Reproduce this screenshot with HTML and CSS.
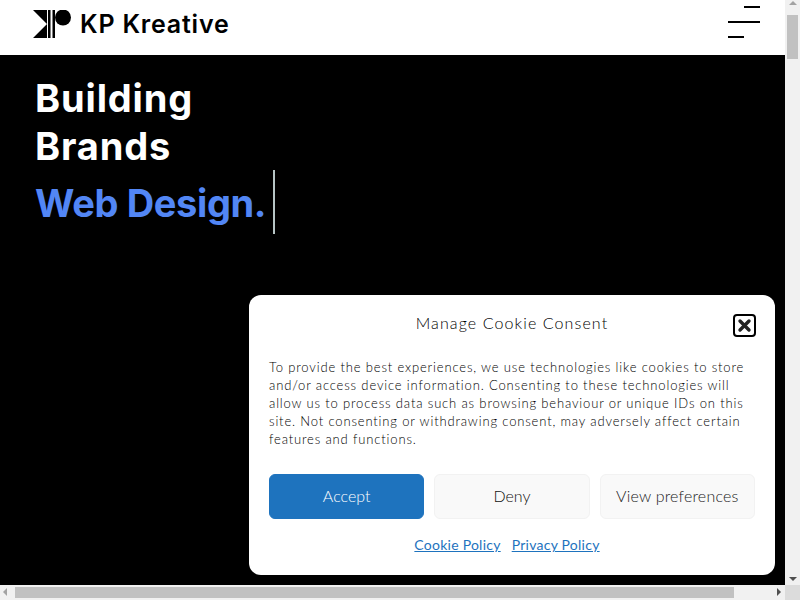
FILE: index.html
```html
<!DOCTYPE html>
<html lang="en">
<head>
    <meta charset="UTF-8">
    <meta name="viewport" content="width=device-width, initial-scale=1.0">
    <title>KP Kreative</title>
    <link rel="stylesheet" href="styles.css">
</head>
<body>

<div class="window">
    <div class="page">
        <header class="site-header">
            <a class="logo" href="#">
                <svg class="logo-mark" width="38" height="28" viewBox="0 0 38 28">
                    <path d="M0 0H14V14L0 0ZM0 28H14V14L0 28Z" fill="#000"/>
                    <rect x="15" y="0" width="2.5" height="28" fill="#000"/>
                    <rect x="19.5" y="0" width="2.5" height="28" fill="#000"/>
                    <circle cx="30" cy="7.5" r="8" fill="#000"/>
                </svg>
                <span class="logo-text">KP Kreative</span>
            </a>
            <button class="menu-toggle" aria-label="Menu">
                <span class="menu-line menu-line-short menu-line-right"></span>
                <span class="menu-line"></span>
                <span class="menu-line menu-line-short"></span>
            </button>
        </header>

        <section class="hero">
            <h1 class="hero-title">Building<br>Brands</h1>
            <div class="hero-typed">
                <span class="typed-text">Web Design.</span>
                <span class="typed-cursor"></span>
            </div>
        </section>
    </div>

    <div class="scrollbar-v">
        <span class="arrow arrow-up"></span>
        <span class="thumb-v"></span>
        <span class="arrow arrow-down"></span>
    </div>
    <div class="scrollbar-h">
        <span class="arrow arrow-left"></span>
        <span class="thumb-h"></span>
        <span class="arrow arrow-right"></span>
    </div>
    <div class="scrollbar-corner"></div>
</div>

<!-- Cookie banner ligt boven de pagina -->
<div class="cookie-banner">
    <div class="cookie-head">
        <div class="cookie-title">Manage Cookie Consent</div>
        <button class="cookie-close" aria-label="Close">
            <svg width="23" height="23" viewBox="0 0 23 23">
                <rect x="1" y="1" width="21" height="21" rx="3" fill="none" stroke="#000" stroke-width="2"/>
                <path d="M7 7L16 16M16 7L7 16" stroke="#222" stroke-width="3.4" stroke-linecap="round"/>
            </svg>
        </button>
    </div>
    <p class="cookie-message">To provide the best experiences, we use technologies like cookies to store and/or access device information. Consenting to these technologies will allow us to process data such as browsing behaviour or unique IDs on this site. Not consenting or withdrawing consent, may adversely affect certain features and functions.</p>
    <div class="cookie-buttons">
        <button class="btn btn-accept">Accept</button>
        <button class="btn">Deny</button>
        <button class="btn btn-prefs">View preferences</button>
    </div>
    <div class="cookie-links">
        <a href="#">Cookie Policy</a>
        <a href="#">Privacy Policy</a>
    </div>
</div>

</body>
</html>
```

FILE: styles.css
```css
html, body {
    height: 100%;
    margin: 0;
}

body {
    font-family: 'Lato', sans-serif;
    overflow: hidden;
    background-color: #000;
}

.window {
    display: grid;
    grid-template-columns: 785px 15px;
    grid-template-rows: 585px 15px;
    height: 600px;
}

.page {
    display: flex;
    flex-direction: column;
    overflow: hidden;
}

/* Header */
.site-header {
    display: flex;
    justify-content: space-between;
    align-items: center;
    height: 55px;
    padding: 0 25px 0 33px;
    box-sizing: border-box;
    background-color: #fff;
}

.logo {
    display: flex;
    align-items: center;
    gap: 9px;
    color: #000;
    text-decoration: none;
    margin-top: -7px;
}

.logo-text {
    font-family: 'Inter', sans-serif;
    font-size: 25px;
    font-weight: 600;
    letter-spacing: 0.8px;
}

.menu-toggle {
    display: flex;
    flex-direction: column;
    gap: 13px;
    width: 32px;
    padding: 0;
    border: none;
    background: none;
    margin-top: -11px;
}

.menu-line {
    display: block;
    width: 32px;
    height: 2px;
    background-color: #000;
}

.menu-line-short {
    width: 16px;
}

.menu-line-right {
    align-self: flex-end;
}

/* Hero */
.hero {
    flex: 1;
    padding: 19px 35px;
    background-color: #000;
    color: #fff;
}

.hero-title {
    margin: 0;
    font-family: 'Inter', sans-serif;
    font-size: 38px;
    line-height: 48px;
    font-weight: 700;
    letter-spacing: 0.85px;
}

.hero-typed {
    display: flex;
    align-items: center;
    gap: 7px;
    height: 64px;
}

.typed-text {
    font-family: 'Inter', sans-serif;
    font-size: 38px;
    font-weight: 700;
    letter-spacing: -0.36px;
    padding-top: 2px;
    color: #5286f5;
}

.typed-cursor {
    width: 2px;
    height: 64px;
    background-color: #b6c4c4;
}

/* Cookie banner */
.cookie-banner {
    position: fixed;
    left: 249px;
    top: 295px;
    width: 526px;
    height: 280px;
    padding: 20px;
    box-sizing: border-box;
    background-color: #fff;
    border-radius: 12px;
    color: #222;
}

.cookie-head {
    display: flex;
    align-items: center;
    height: 20px;
}

.cookie-title {
    flex: 1;
    padding-left: 22px;
    text-align: center;
    font-size: 16px;
    font-weight: 300;
    letter-spacing: 1.1px;
    color: #000;
    margin-top: -5px;
}

.cookie-close {
    width: 23px;
    height: 23px;
    padding: 0;
    border: none;
    background: none;
    margin-right: -1px;
}

.cookie-message {
    margin: 23px 0 0;
    font-size: 13px;
    font-weight: 300;
    line-height: 18px;
    letter-spacing: 0.85px;
    color: #000;
}

.cookie-buttons {
    display: flex;
    gap: 10px;
    margin-top: 26px;
}

.btn {
    flex: 1;
    height: 45px;
    padding: 0 0 2px;
    font-family: inherit;
    font-size: 16px;
    font-weight: 300;
    color: #111;
    background-color: #f9f9f9;
    border: 1px solid #f2f2f2;
    border-radius: 6px;
}

.btn-accept {
    color: #fff;
    background-color: #1e73be;
    border-color: #1e73be;
}

.btn-prefs {
    color: #222;
    letter-spacing: 0.2px;
}

.cookie-links {
    display: flex;
    justify-content: center;
    gap: 11px;
    margin-top: 17px;
    padding-right: 10px;
}

.cookie-links a {
    font-size: 14px;
    letter-spacing: 0.25px;
    color: #1e73be;
}

/* Scrollbars */
.scrollbar-v {
    display: flex;
    flex-direction: column;
    align-items: center;
    background-color: #f1f1f1;
}

.thumb-v {
    width: 11px;
    height: 44px;
    margin: 1px 0 auto;
    background-color: #c1c1c1;
}

.scrollbar-h {
    display: flex;
    align-items: center;
    background-color: #f1f1f1;
}

.thumb-h {
    width: 719px;
    height: 11px;
    margin-right: auto;
    background-color: #c1c1c1;
}

.scrollbar-corner {
    background-color: #dcdcdc;
}

.arrow {
    flex: none;
    width: 15px;
    height: 14px;
    position: relative;
}

.scrollbar-h .arrow {
    height: 15px;
}

.arrow::before {
    content: "";
    position: absolute;
    left: 4px;
    top: 4px;
    border: 4px solid transparent;
}

.arrow-up::before {
    top: 1px;
    border-top-width: 0;
    border-bottom: 4px solid #a3a3a3;
}

.arrow-down::before {
    top: 6px;
    border-bottom-width: 0;
    border-top: 4px solid #505050;
}

.arrow-left::before {
    left: 3px;
    top: 3px;
    border-left-width: 0;
    border-right: 4px solid #a3a3a3;
}

.arrow-right::before {
    left: 7px;
    top: 3px;
    border-right-width: 0;
    border-left: 4px solid #505050;
}
```
